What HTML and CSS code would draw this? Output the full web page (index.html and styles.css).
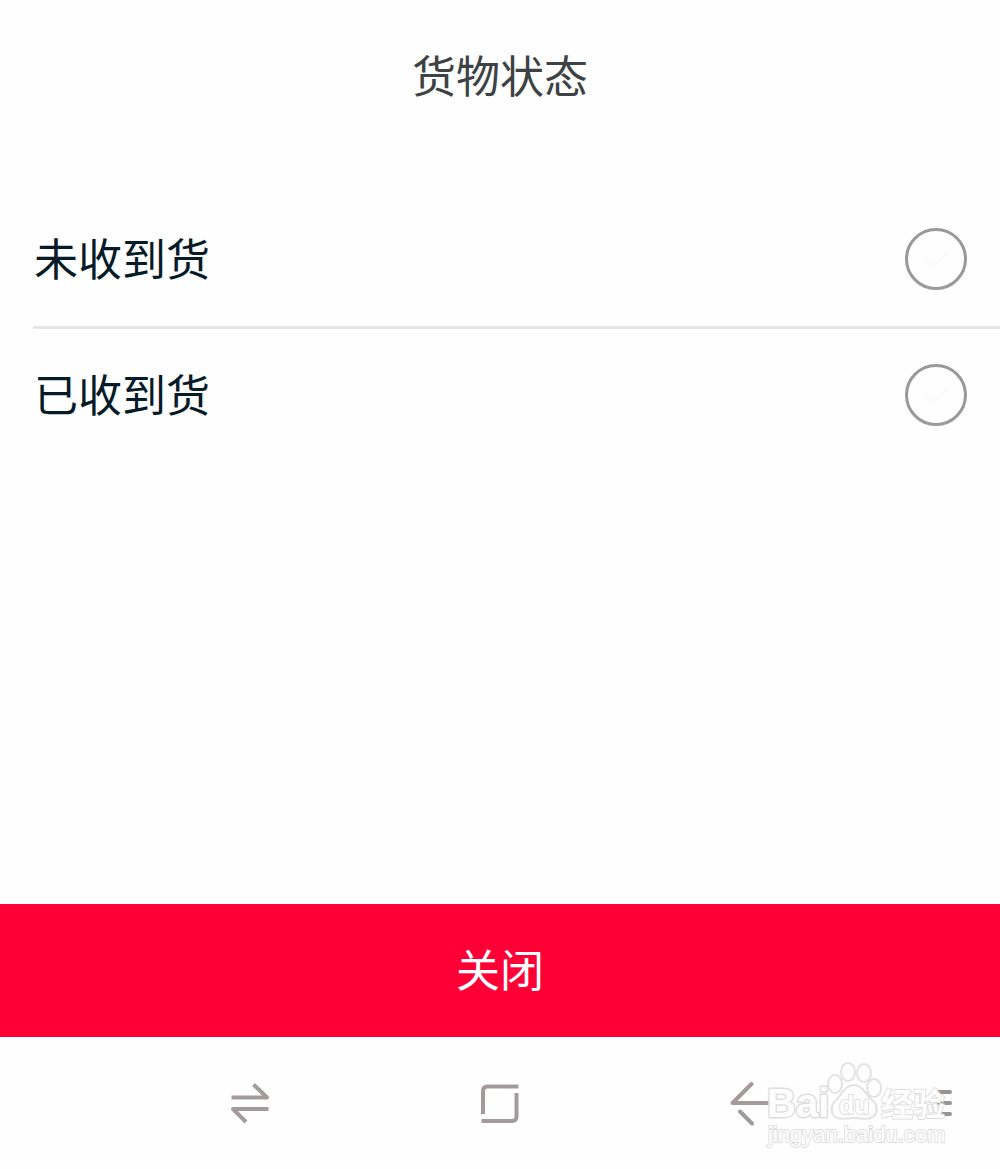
FILE: index.html
```html
<!DOCTYPE html>
<html lang="zh-CN">
<head>
<meta charset="utf-8">
<meta name="viewport" content="width=device-width, initial-scale=1">
<title>货物状态</title>
<link rel="stylesheet" href="styles.css">
</head>
<body>
<main class="sheet">
  <h1 class="title">货物状态</h1>
  <form class="options">
    <label class="option"><span class="option-text">未收到货</span><input class="radio" type="radio" name="status" value="pending"></label>
    <label class="option"><span class="option-text">已收到货</span><input class="radio" type="radio" name="status" value="received"></label>
  </form>
  <button class="close" type="button">关闭</button>
</main>
<nav class="navbar">
  <button class="nav-button nav-switch" type="button" aria-label="切换">
    <svg class="icon" viewBox="0 0 44 44"><path d="M3.500 16.500H39L25.500 3.500M40.500 28H5L18 41"/></svg>
  </button>
  <button class="nav-button" type="button" aria-label="主页">
    <svg class="icon" viewBox="0 0 44 44"><path d="M5 33V10Q5 5.500 9.500 5.500H40.500M38.500 12V35.500Q38.500 40 34 40H3.500"/></svg>
  </button>
  <button class="nav-button" type="button" aria-label="返回">
    <svg class="icon icon-back" viewBox="0 0 44 44"><path d="M42 22H4.500L23.500 3M12 30.500L24 42.500"/></svg>
  </button>
  <button class="nav-button nav-menu" type="button" aria-label="菜单">
    <svg class="icon icon-menu" viewBox="0 0 44 44"><path d="M23 11H34M23 22H34M23 33H34"/></svg>
  </button>
  <svg class="watermark" viewBox="0 0 200 100" role="img" aria-label="Baidu 经验">
    <g class="outline">
      <g class="paw">
        <ellipse cx="75" cy="29" rx="7" ry="9"/>
        <ellipse cx="88" cy="17" rx="7" ry="9"/>
        <ellipse cx="104" cy="18" rx="7" ry="9"/>
        <ellipse cx="114" cy="33" rx="7" ry="9"/>
        <path d="M94 30C86 30 83 37 78 43C72 48 70 54 73 60C77 66 85 63 94 63C103 63 110 66 115 60C119 53 115 47 110 43C105 38 102 30 94 30Z"/>
      </g>
      <text class="brand" x="7" y="62">Bai</text>
      <text class="brand-small" x="79" y="59">du</text>
      <text class="brand-cn" x="121" y="61">经验</text>
      <text class="site" x="8" y="87">jingyan.baidu.com</text>
    </g>
  </svg>
</nav>
</body>
</html>
```
FILE: styles.css
```css
* {
  box-sizing: border-box;
}

body {
  margin: 0;
  min-height: 100vh;
  display: flex;
  flex-direction: column;
  background: #fefefe;
  color: #051b28;
  font-family: "Noto Sans CJK SC", sans-serif;
  font-size: 44px;
  line-height: 64px;
}

button {
  margin: 0;
  padding: 0;
  border: 0;
  background: none;
  font: inherit;
}

.sheet {
  flex: 1;
  display: flex;
  flex-direction: column;
}

.title {
  margin: 0;
  padding: 42px 0 86px;
  color: #3d4245;
  font-size: 44px;
  font-weight: 400;
  text-align: center;
}

.options {
  flex: 1;
  padding-left: 33px;
}

.option {
  display: flex;
  align-items: center;
  justify-content: space-between;
  height: 134px;
  padding: 0 33px 0 1px;
}

.option + .option {
  border-top: 3px solid #e6e6e6;
}

.option-text {
  padding-bottom: 4px;
}

.radio {
  appearance: none;
  display: grid;
  place-items: center;
  width: 62px;
  height: 62px;
  margin: 0;
  border: 3px solid #999;
  border-radius: 50%;
}

.radio::after {
  content: "";
  width: 20px;
  height: 10px;
  margin-bottom: 6px;
  border: solid #fafafa;
  border-width: 0 0 2px 2px;
  transform: rotate(-45deg);
}

.radio:checked {
  border-color: #ff0036;
  background: #ff0036;
}

.close {
  height: 133px;
  padding-bottom: 6px;
  background: #ff0036;
  color: #fff;
}

.navbar {
  position: relative;
  display: grid;
  grid-template-columns: 12.5% 25% 25% 25% 12.5%;
  height: 132px;
}

.nav-button {
  display: flex;
  align-items: center;
  justify-content: center;
}

.nav-switch {
  grid-column: 2;
}

.icon {
  width: 44px;
  height: 44px;
  overflow: visible;
  fill: none;
  stroke: #a39b9b;
  stroke-width: 4;
  stroke-linejoin: round;
}

.icon-back,
.icon-menu {
  stroke-linecap: round;
}

.icon-menu {
  stroke: #949494;
}

.watermark {
  position: absolute;
  right: 40px;
  top: 18px;
  width: 200px;
  height: 100px;
  pointer-events: none;
}

.outline {
  fill: #fefefe;
  stroke: #dedede;
  stroke-width: 2;
  stroke-linejoin: round;
  paint-order: stroke;
  font-family: "Liberation Sans", "Noto Sans CJK SC", sans-serif;
  font-weight: 700;
}

.paw {
  stroke: #e2e2e2;
  paint-order: normal;
}

.brand {
  font-size: 40px;
  stroke-width: 3;
}

.brand-small {
  font-size: 25px;
}

.brand-cn {
  font-size: 32px;
}

.site {
  font-size: 22px;
  font-weight: 400;
}
```
